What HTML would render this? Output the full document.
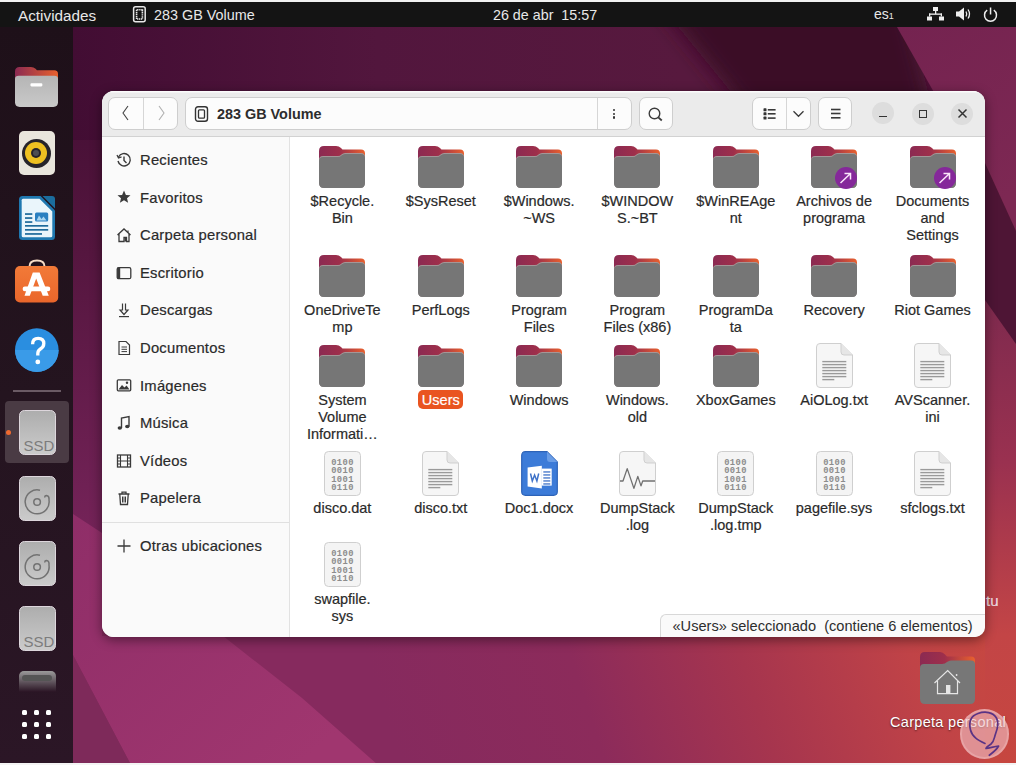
<!DOCTYPE html><html><head><meta charset="utf-8"><style>
*{margin:0;padding:0;box-sizing:border-box}
html,body{width:1016px;height:765px;overflow:hidden;background:#fff}
body{position:relative;font-family:"Liberation Sans", sans-serif;}
.abs{position:absolute}
.lbl{position:absolute;width:98px;text-align:center;font-size:14.5px;line-height:17px;color:#2a2a2a;white-space:nowrap;-webkit-text-stroke:0.2px currentColor}
.sb{position:absolute;left:140px;font-size:14.8px;line-height:17px;color:#2a2a2a;white-space:nowrap;letter-spacing:0.22px;-webkit-text-stroke:0.2px #2a2a2a}
.btn{position:absolute;top:97.2px;height:33px;background:#fcfcfc;border:1px solid #cecece;border-radius:7px}
</style></head><body>

<svg class="abs" style="left:0;top:0" width="1016" height="765" viewBox="0 0 1016 765">
<defs>
<linearGradient id="wtop" gradientUnits="userSpaceOnUse" x1="73" y1="0" x2="680" y2="0"><stop offset="0" stop-color="#420d33"/><stop offset="0.5" stop-color="#52163d"/><stop offset="1" stop-color="#57193e"/></linearGradient>
<linearGradient id="wleft" gradientUnits="userSpaceOnUse" x1="0" y1="27" x2="0" y2="530"><stop offset="0" stop-color="#3e0c30"/><stop offset="0.45" stop-color="#55163f"/><stop offset="1" stop-color="#742358"/></linearGradient>
<linearGradient id="wdark" gradientUnits="userSpaceOnUse" x1="680" y1="0" x2="920" y2="0"><stop offset="0" stop-color="#3f0f2c"/><stop offset="1" stop-color="#3b0d28"/></linearGradient>
<linearGradient id="wmag" gradientUnits="userSpaceOnUse" x1="900" y1="27" x2="1016" y2="190"><stop offset="0" stop-color="#742350"/><stop offset="1" stop-color="#7d2853"/></linearGradient>
<linearGradient id="wright" gradientUnits="userSpaceOnUse" x1="0" y1="300" x2="0" y2="765"><stop offset="0" stop-color="#7e2a4e"/><stop offset="0.35" stop-color="#9a3150"/><stop offset="0.72" stop-color="#c34546"/><stop offset="1" stop-color="#c6463f"/></linearGradient>
<linearGradient id="wbot" gradientUnits="userSpaceOnUse" x1="400" y1="760" x2="1016" y2="560"><stop offset="0" stop-color="#862a5e"/><stop offset="0.3" stop-color="#8c2b5b"/><stop offset="0.55" stop-color="#a6354e"/><stop offset="0.8" stop-color="#c04347"/><stop offset="1" stop-color="#ca4a3e"/></linearGradient>
<linearGradient id="wray" gradientUnits="userSpaceOnUse" x1="73" y1="520" x2="300" y2="765"><stop offset="0" stop-color="#8f2e68"/><stop offset="1" stop-color="#a0366f"/></linearGradient>
</defs>
<rect x="0" y="0" width="1016" height="765" fill="url(#wleft)"/>
<rect x="73" y="0" width="943" height="140" fill="url(#wtop)"/>
<filter id="blr" x="-50%" y="-50%" width="200%" height="200%"><feGaussianBlur stdDeviation="10"/></filter><polygon points="640,-20 900,-20 940,140 770,140" fill="#3a0c28" filter="url(#blr)"/>
<polygon points="897,27 1016,27 1016,140 961,140" fill="url(#wmag)"/>
<rect x="985" y="140" width="31" height="625" fill="url(#wright)"/>
<polygon points="985,91 1016,91 1016,231 985,163" fill="url(#wmag)"/>
<polygon points="985,163 1016,231 1016,344 985,300" fill="#4e1535"/>
<rect x="73" y="560" width="912" height="205" fill="url(#wbot)"/>
<polygon points="73,514 102,533 102,636 223,636 302,698 378,765 131,765 73,655" fill="url(#wray)"/>
<polygon points="73,655 131,765 73,765" fill="#7e2a5a"/>
</svg>

<div class="abs" style="left:0;top:0;width:1016px;height:2px;background:#f2f2f2"></div>
<div class="abs" style="left:0;top:2px;width:1016px;height:25px;background:#141414"></div>
<div class="abs" style="left:18px;top:7px;font-size:15.3px;color:#e8e8e8">Actividades</div>
<svg class="abs" style="left:131px;top:5px" width="17" height="19" viewBox="0 0 17 19"><rect x="2.6" y="1.8" width="11.6" height="15" rx="2" fill="none" stroke="#e8e8e8" stroke-width="1.5"/><rect x="5.6" y="4.8" width="5.8" height="9.2" fill="none" stroke="#e8e8e8" stroke-width="1.6" stroke-dasharray="1.3 0.6"/></svg>
<div class="abs" style="left:154px;top:7px;font-size:14.4px;color:#e8e8e8">283 GB Volume</div>
<div class="abs" style="left:493px;top:7px;font-size:14.3px;color:#e8e8e8;white-space:pre">26 de abr  15:57</div>
<div class="abs" style="left:874px;top:6px;font-size:14px;color:#e8e8e8">es<span style="font-size:9px">1</span></div>
<svg class="abs" style="left:927px;top:7px" width="17" height="14" viewBox="0 0 17 14"><rect x="6" y="0" width="5" height="4" fill="#eee"/><rect x="8" y="4" width="1.3" height="3" fill="#eee"/><rect x="2" y="6.5" width="13" height="1.3" fill="#eee"/><rect x="2" y="6.5" width="1.3" height="3" fill="#eee"/><rect x="13.7" y="6.5" width="1.3" height="3" fill="#eee"/><rect x="0" y="9.5" width="5" height="4" fill="#eee"/><rect x="12" y="9.5" width="5" height="4" fill="#eee"/></svg>
<svg class="abs" style="left:956px;top:7px" width="16" height="14" viewBox="0 0 16 14"><path d="M0 4.5H3L8 0.5V13.5L3 9.5H0Z" fill="#eee"/><path d="M10 4.5Q11.5 7 10 9.5M12 2.5Q15 7 12 11.5" stroke="#eee" stroke-width="1.3" fill="none"/></svg>
<svg class="abs" style="left:983px;top:7px" width="15" height="15" viewBox="0 0 15 15"><path d="M4.2 3.2A6 6 0 1 0 10.8 3.2" stroke="#eee" stroke-width="1.5" fill="none"/><rect x="6.8" y="0.5" width="1.5" height="7" fill="#eee"/></svg>

<div class="abs" style="left:0;top:27px;width:73px;height:736px;background:linear-gradient(#1e1019,#24141f 50%,#2b1626)"></div>

<svg class="abs" style="left:15.4px;top:67.4px" width="43" height="40" viewBox="0 0 46 43" preserveAspectRatio="none"><defs><linearGradient id="dft" x1="0" x2="1"><stop offset="0" stop-color="#8b2a52"/><stop offset="1" stop-color="#e8612e"/></linearGradient><linearGradient id="dfb" x1="0" y1="0" x2="0" y2="1"><stop offset="0" stop-color="#b5b5b5"/><stop offset="1" stop-color="#c9c9c9"/></linearGradient></defs><path d="M0 5Q0 0 5 0H17Q20 0 22 2L23.5 3.5H42Q46 3.5 46 7.5V20H0Z" fill="url(#dft)"/><path d="M0 13Q0 9.5 4 9.5H42Q46 9.5 46 13V38Q46 43 41 43H5Q0 43 0 38Z" fill="url(#dfb)"/><rect x="16.5" y="17.5" width="12.8" height="3.4" rx="1.2" fill="#fff"/></svg>
<div class="abs" style="left:18.6px;top:130.8px;width:36px;height:44.5px;border-radius:5px;background:#e9e5dc"></div>
<div class="abs" style="left:21.6px;top:138.9px;width:29px;height:29px;border-radius:50%;background:#26232a"></div>
<div class="abs" style="left:25.1px;top:142.4px;width:22px;height:22px;border-radius:50%;background:#eec021"></div>
<div class="abs" style="left:31.1px;top:148.4px;width:10px;height:10px;border-radius:50%;background:#26232a"></div>
<div class="abs" style="left:33.1px;top:150.4px;width:6px;height:6px;border-radius:50%;background:#4e4e52"></div>
<svg class="abs" style="left:19px;top:196.4px" width="36" height="44" viewBox="0 0 36 44"><path d="M3.5 0H21.6L36 14.4V40.5Q36 44 32.5 44H3.5Q0 44 0 40.5V3.5Q0 0 3.5 0Z" fill="#1f78b0"/><path d="M4 2.7H20.5L33.3 15.5V39.8Q33.3 41.3 31.8 41.3H4.2Q2.7 41.3 2.7 39.8V4.2Q2.7 2.7 4 2.7Z" fill="#eaf5fb"/><path d="M23.5 0H33Q36 0 36 3V12.5Z" fill="#1b6d9e"/><rect x="6" y="17.2" width="7.3" height="1.7" fill="#1f6a9a"/><rect x="6" y="21.2" width="7.3" height="1.7" fill="#1f6a9a"/><rect x="6" y="25.2" width="7.3" height="1.7" fill="#1f6a9a"/><rect x="16" y="16.6" width="13.2" height="9" rx="1.5" fill="#2a7fc0"/><path d="M17.5 24.5L20 19.5L22.5 23L24.5 20.5L27.5 24.5Z" fill="#a8d4ef"/><rect x="6" y="29" width="23.2" height="1.7" fill="#1f6a9a"/><rect x="6" y="33" width="23.2" height="1.7" fill="#1f6a9a"/><rect x="6" y="37.1" width="17" height="1.7" fill="#1f6a9a"/></svg>
<svg class="abs" style="left:15.2px;top:259px" width="44" height="44" viewBox="0 0 44 44"><defs><linearGradient id="apg" x1="0" y1="0" x2="0" y2="1"><stop offset="0" stop-color="#f27a38"/><stop offset="1" stop-color="#ea662b"/></linearGradient></defs><path d="M14.5 10V7.5Q14.5 1.6 22 1.6Q29.5 1.6 29.5 7.5V10" stroke="#f6dcc6" stroke-width="2" fill="none"/><rect x="0" y="7.1" width="43.2" height="36.4" rx="5" fill="url(#apg)"/><path d="M17.8 13.6H24.6L33.8 36.7H27.7L21.2 19.5L14.8 36.7H9.5Z" fill="#fff"/><rect x="7.6" y="27.6" width="27.7" height="4.6" rx="2.3" fill="#fff"/></svg>
<svg class="abs" style="left:14.8px;top:327.7px" width="44" height="44" viewBox="0 0 44 44"><circle cx="21.8" cy="22.1" r="21.8" fill="#2a8ee0"/><path d="M0 22.1A21.8 21.8 0 0 0 43.6 22.1Z" fill="#3a9be8"/><path d="M17.6 16.2Q17.6 10.4 23.2 10.4Q28.8 10.4 28.8 15.6Q28.8 19 25.4 21Q22.8 22.6 22.8 25.6V27.6" stroke="#fff" stroke-width="3.3" fill="none"/><circle cx="22.8" cy="33.9" r="2.4" fill="#fff"/></svg>
<div class="abs" style="left:12.5px;top:390px;width:48px;height:1.5px;background:#6a5a64"></div>
<div class="abs" style="left:4.5px;top:400.5px;width:64.5px;height:62.5px;border-radius:4px;background:#4a3b44"></div>
<div class="abs" style="left:6px;top:430px;width:5px;height:5px;border-radius:50%;background:#f06a30"></div>

<svg class="abs" style="left:18.5px;top:410px" width="37" height="45" viewBox="0 0 37 45"><defs><linearGradient id="dg410" x1="0" y1="0" x2="0" y2="1"><stop offset="0" stop-color="#adadad"/><stop offset="1" stop-color="#cbcbcb"/></linearGradient></defs><rect x="0.5" y="0.5" width="36" height="44" rx="5" fill="url(#dg410)" stroke="#ddd6dc" stroke-width="1"/><text x="20" y="41" text-anchor="middle" font-family="Liberation Sans" font-size="15" fill="#7c7c7c">SSD</text></svg>
<svg class="abs" style="left:18.5px;top:475.5px" width="37" height="45" viewBox="0 0 37 45"><defs><linearGradient id="dg475.5" x1="0" y1="0" x2="0" y2="1"><stop offset="0" stop-color="#adadad"/><stop offset="1" stop-color="#cbcbcb"/></linearGradient></defs><rect x="0.5" y="0.5" width="36" height="44" rx="5" fill="url(#dg475.5)" stroke="#ddd6dc" stroke-width="1"/><path d="M21 14.2A12 12 0 1 0 30 24Q30.5 20 27.5 19.5Q25.5 19.5 26 21.5" stroke="#727272" stroke-width="1.5" fill="none"/><circle cx="18.1" cy="26" r="3.3" stroke="#727272" stroke-width="1.5" fill="none"/></svg>
<svg class="abs" style="left:18.5px;top:541px" width="37" height="45" viewBox="0 0 37 45"><defs><linearGradient id="dg541" x1="0" y1="0" x2="0" y2="1"><stop offset="0" stop-color="#adadad"/><stop offset="1" stop-color="#cbcbcb"/></linearGradient></defs><rect x="0.5" y="0.5" width="36" height="44" rx="5" fill="url(#dg541)" stroke="#ddd6dc" stroke-width="1"/><path d="M21 14.2A12 12 0 1 0 30 24Q30.5 20 27.5 19.5Q25.5 19.5 26 21.5" stroke="#727272" stroke-width="1.5" fill="none"/><circle cx="18.1" cy="26" r="3.3" stroke="#727272" stroke-width="1.5" fill="none"/></svg>
<svg class="abs" style="left:18.5px;top:606px" width="37" height="45" viewBox="0 0 37 45"><defs><linearGradient id="dg606" x1="0" y1="0" x2="0" y2="1"><stop offset="0" stop-color="#adadad"/><stop offset="1" stop-color="#cbcbcb"/></linearGradient></defs><rect x="0.5" y="0.5" width="36" height="44" rx="5" fill="url(#dg606)" stroke="#ddd6dc" stroke-width="1"/><text x="20" y="41" text-anchor="middle" font-family="Liberation Sans" font-size="15" fill="#7c7c7c">SSD</text></svg>
<div class="abs" style="left:18.5px;top:671px;width:37px;height:21px;border-radius:5px 5px 0 0;background:linear-gradient(#9a9a9a,#2a1424)"></div>
<div class="abs" style="left:22px;top:675px;width:30px;height:6px;border-radius:3px;background:#555"></div>

<div class="abs" style="left:21.9px;top:709.7px;width:5.6px;height:5.6px;border-radius:1.5px;background:#fff"></div>
<div class="abs" style="left:33.8px;top:709.7px;width:5.6px;height:5.6px;border-radius:1.5px;background:#fff"></div>
<div class="abs" style="left:45.7px;top:709.7px;width:5.6px;height:5.6px;border-radius:1.5px;background:#fff"></div>
<div class="abs" style="left:21.9px;top:721.7px;width:5.6px;height:5.6px;border-radius:1.5px;background:#fff"></div>
<div class="abs" style="left:33.8px;top:721.7px;width:5.6px;height:5.6px;border-radius:1.5px;background:#fff"></div>
<div class="abs" style="left:45.7px;top:721.7px;width:5.6px;height:5.6px;border-radius:1.5px;background:#fff"></div>
<div class="abs" style="left:21.9px;top:733.7px;width:5.6px;height:5.6px;border-radius:1.5px;background:#fff"></div>
<div class="abs" style="left:33.8px;top:733.7px;width:5.6px;height:5.6px;border-radius:1.5px;background:#fff"></div>
<div class="abs" style="left:45.7px;top:733.7px;width:5.6px;height:5.6px;border-radius:1.5px;background:#fff"></div>
<div class="abs" style="left:0;top:763px;width:1016px;height:2px;background:#f4f4f4"></div>
<svg class="abs" style="left:920px;top:652px" width="55" height="52" viewBox="0 0 55 52"><defs><linearGradient id="htg" x1="0" x2="1"><stop offset="0" stop-color="#8b2a52"/><stop offset="0.45" stop-color="#9e2f4b"/><stop offset="1" stop-color="#e8612e"/></linearGradient></defs><path d="M0 5Q0 0 5 0H20Q23 0 25 2.5L27 4.5H51Q55 4.5 55 8.5V24H0Z" fill="url(#htg)"/><path d="M0 16Q0 12 4 12H22Q25 12 27 10Q29 8.5 31 8.5H51Q55 8.5 55 12.5V47Q55 52 50 52H5Q0 52 0 47Z" fill="#777"/><path d="M14.5 31L27.7 18.6L40 31M17.5 29V41.6H37.5V29" stroke="#e6e6e6" stroke-width="1.2" fill="none"/><rect x="26" y="33" width="4.4" height="8.6" fill="#e6e6e6"/><circle cx="36.6" cy="23" r="0.9" fill="#e6e6e6"/></svg>
<div class="abs" style="left:890px;top:714px;font-size:14.5px;color:#fff;letter-spacing:0.3px;text-shadow:0 1px 2px rgba(0,0,0,0.6);white-space:nowrap">Carpeta personal</div>
<div class="abs" style="left:986px;top:592px;font-size:15px;color:#efdde2;-webkit-text-stroke:0.2px #efdde2">tu</div>
<div class="abs" style="left:959.7px;top:709px;width:49.7px;height:50px;border-radius:50%;background:rgba(240,190,195,0.62);box-shadow:inset 0 0 0 2px rgba(255,220,220,0.25)"></div>
<svg class="abs" style="left:959.7px;top:709px" width="50" height="50" viewBox="0 0 50 50"><path d="M25 34.4C18 31 12.3 28 10.5 21C8.5 13 11 7 18 4.5C25 2 33 3 36.5 9C38.5 13 37.5 20 35.5 25C34 29 34.5 32 31 35C28 37 26 39 26 39.5C30 38.8 35 37.5 38.6 37C37 40 33 43.5 29.3 46.3" stroke="#5a3385" stroke-width="1.7" fill="none" stroke-linecap="round" stroke-linejoin="round"/></svg>

<div class="abs" style="left:102px;top:91px;width:883px;height:546px;border-radius:12px;background:#fff;box-shadow:0 3px 12px rgba(0,0,0,0.45);overflow:hidden">
<div class="abs" style="left:0;top:0;width:883px;height:46px;background:#ebebeb;border-bottom:1px solid #d2d2d2;box-shadow:inset 0 1.5px #fbfbfb"></div>
<div class="abs" style="left:0;top:46px;width:188px;height:500px;background:#fafafa;border-right:1px solid #e2e2e2"></div>
</div>

<div class="btn" style="left:108px;width:70px"></div>
<div class="abs" style="left:143px;top:98px;width:1px;height:31px;background:#d6d6d6"></div>
<svg class="abs" style="left:119px;top:104px" width="14" height="18" viewBox="0 0 14 18"><path d="M9 2L4 9L9 16" stroke="#444" stroke-width="1.1" fill="none"/></svg>
<svg class="abs" style="left:154px;top:104px" width="14" height="18" viewBox="0 0 14 18"><path d="M5 2L10 9L5 16" stroke="#b0b0b0" stroke-width="1.1" fill="none"/></svg>
<div class="btn" style="left:185px;width:447px"></div>
<div class="abs" style="left:597px;top:98px;width:1px;height:31px;background:#d6d6d6"></div>
<svg class="abs" style="left:194px;top:106px" width="15" height="16" viewBox="0 0 15 16"><rect x="1.5" y="0.8" width="12" height="14.4" rx="2.5" fill="none" stroke="#333" stroke-width="1.4"/><rect x="4.5" y="3.8" width="6" height="8.4" rx="1" fill="none" stroke="#333" stroke-width="1.3"/></svg>
<div class="abs" style="left:217px;top:106px;font-size:14.4px;font-weight:bold;color:#2d2d2d">283 GB Volume</div>
<div class="abs" style="left:612.8px;top:108.6px;width:2.5px;height:2.5px;border-radius:50%;background:#333"></div>
<div class="abs" style="left:612.8px;top:112.5px;width:2.5px;height:2.5px;border-radius:50%;background:#333"></div>
<div class="abs" style="left:612.8px;top:116.4px;width:2.5px;height:2.5px;border-radius:50%;background:#333"></div>
<div class="btn" style="left:639px;width:34px"></div>
<svg class="abs" style="left:647px;top:105.5px" width="18" height="18" viewBox="0 0 18 18"><circle cx="7.5" cy="7.5" r="5.3" stroke="#3c3c3c" stroke-width="1.4" fill="none"/><path d="M11.3 11.3L14.8 14.5" stroke="#3c3c3c" stroke-width="1.8"/></svg>
<div class="btn" style="left:752px;width:59px"></div>
<div class="abs" style="left:786px;top:98px;width:1px;height:31px;background:#d6d6d6"></div>
<svg class="abs" style="left:762.5px;top:107.5px" width="14" height="13" viewBox="0 0 14 13"><rect x="0.5" y="0.3" width="3" height="3" rx="0.6" fill="#333"/><rect x="0.5" y="4.3" width="3" height="3" rx="0.6" fill="#333"/><rect x="0.5" y="8.6" width="3" height="3" rx="0.6" fill="#333"/><rect x="4.8" y="1" width="7.8" height="1.6" fill="#3a3a3a"/><rect x="4.8" y="5" width="7.8" height="1.6" fill="#3a3a3a"/><rect x="4.8" y="9.3" width="7.8" height="1.6" fill="#3a3a3a"/></svg>
<svg class="abs" style="left:792px;top:109px" width="13" height="9" viewBox="0 0 13 9"><path d="M1.5 2.3L6.5 7.3L11.5 2.3" stroke="#3a3a3a" stroke-width="1.3" fill="none"/></svg>
<div class="btn" style="left:818px;width:34px"></div>
<svg class="abs" style="left:830.5px;top:107.5px" width="10" height="11" viewBox="0 0 10 11"><rect x="0" y="0.7" width="9.5" height="1.6" fill="#3a3a3a"/><rect x="0" y="4.7" width="9.5" height="1.6" fill="#3a3a3a"/><rect x="0" y="9" width="9.5" height="1.6" fill="#3a3a3a"/></svg>
<div class="abs" style="left:872px;top:102.3px;width:22px;height:22px;border-radius:50%;background:#dddddd"></div>
<div class="abs" style="left:879px;top:115.5px;width:8px;height:1.6px;background:#333"></div>
<div class="abs" style="left:911.7px;top:102.5px;width:22px;height:22px;border-radius:50%;background:#dddddd"></div>
<div class="abs" style="left:918.8px;top:109.6px;width:8px;height:8px;border:1.4px solid #333"></div>
<div class="abs" style="left:951.4px;top:102.5px;width:22px;height:22px;border-radius:50%;background:#dddddd"></div>
<svg class="abs" style="left:952px;top:102.5px" width="21" height="21" viewBox="0 0 21 21"><path d="M6.5 6.5L14.5 14.5M14.5 6.5L6.5 14.5" stroke="#333" stroke-width="1.5"/></svg>

<div class="sb" style="top:151.9px">Recientes</div>
<div class="sb" style="top:189.5px">Favoritos</div>
<div class="sb" style="top:227.1px">Carpeta personal</div>
<div class="sb" style="top:264.7px">Escritorio</div>
<div class="sb" style="top:302.3px">Descargas</div>
<div class="sb" style="top:339.9px">Documentos</div>
<div class="sb" style="top:377.5px">Imágenes</div>
<div class="sb" style="top:415.1px">Música</div>
<div class="sb" style="top:452.7px">Vídeos</div>
<div class="sb" style="top:490.3px">Papelera</div>
<div class="abs" style="left:102px;top:522px;width:187px;height:1px;background:#e0e0e0"></div>
<div class="sb" style="top:537.8px">Otras ubicaciones</div>
<svg class="abs" style="left:116px;top:151.7px" width="16" height="16" viewBox="0 0 16 16"><path d="M2.5 5A6.2 6.2 0 1 1 2 9" stroke="#3a3a3a" stroke-width="1.4" fill="none"/><path d="M1 3L2.5 6L5.5 4.8" stroke="#3a3a3a" stroke-width="1.3" fill="none"/><path d="M8 4.5V8.5L10.5 11" stroke="#3a3a3a" stroke-width="1.4" fill="none"/></svg>
<svg class="abs" style="left:116px;top:189.3px" width="16" height="16" viewBox="0 0 16 16"><path d="M8 1.5L9.9 5.9L14.5 6.2L11 9.2L12.1 13.8L8 11.3L3.9 13.8L5 9.2L1.5 6.2L6.1 5.9Z" fill="#3a3a3a"/></svg>
<svg class="abs" style="left:116px;top:226.9px" width="16" height="16" viewBox="0 0 16 16"><path d="M1.5 8L8 2L14.5 8M3 7V14.5H8V10.5H10.5V14.5H13V7" stroke="#3a3a3a" stroke-width="1.3" fill="none"/><rect x="8.5" y="10.5" width="2.5" height="4" fill="#3a3a3a"/><path d="M12 3.5V5.5" stroke="#3a3a3a" stroke-width="1.2"/></svg>
<svg class="abs" style="left:116px;top:264.5px" width="16" height="16" viewBox="0 0 16 16"><rect x="1.2" y="2.7" width="13.6" height="11" rx="1.5" fill="none" stroke="#3a3a3a" stroke-width="1.3"/><rect x="1.2" y="2.7" width="3" height="11" fill="#3a3a3a"/></svg>
<svg class="abs" style="left:116px;top:302.1px" width="16" height="16" viewBox="0 0 16 16"><path d="M6.5 1.5V8H4L8 12.5L12 8H9.5V1.5" stroke="#3a3a3a" stroke-width="1.2" fill="none"/><rect x="3" y="14" width="10" height="1.2" fill="#3a3a3a"/></svg>
<svg class="abs" style="left:116px;top:339.7px" width="16" height="16" viewBox="0 0 16 16"><path d="M3 1.5H10L13.5 5V14.5H3Z" stroke="#3a3a3a" stroke-width="1.2" fill="none"/><path d="M5.5 7H11M5.5 9.3H11M5.5 11.6H11" stroke="#3a3a3a" stroke-width="1"/></svg>
<svg class="abs" style="left:116px;top:377.3px" width="16" height="16" viewBox="0 0 16 16"><rect x="1.3" y="2.8" width="13.4" height="11" rx="1" fill="none" stroke="#3a3a3a" stroke-width="1.3"/><path d="M2.5 12.5L6 8L8.5 10.5L10.5 8.5L13.5 12.5Z" fill="#3a3a3a"/><circle cx="11" cy="5.8" r="1.2" fill="#3a3a3a"/></svg>
<svg class="abs" style="left:116px;top:414.9px" width="16" height="16" viewBox="0 0 16 16"><path d="M5.5 13V3L13 1.5V11.5" stroke="#3a3a3a" stroke-width="1.4" fill="none"/><ellipse cx="3.8" cy="13" rx="2.2" ry="1.8" fill="#3a3a3a"/><ellipse cx="11.3" cy="11.5" rx="2.2" ry="1.8" fill="#3a3a3a"/></svg>
<svg class="abs" style="left:116px;top:452.5px" width="16" height="16" viewBox="0 0 16 16"><rect x="1.5" y="2" width="13" height="12" fill="none" stroke="#3a3a3a" stroke-width="1.3"/><path d="M4.5 2V14M11.5 2V14M1.5 8H14.5M1.5 5H4.5M1.5 11H4.5M11.5 5H14.5M11.5 11H14.5" stroke="#3a3a3a" stroke-width="1.1"/></svg>
<svg class="abs" style="left:116px;top:490.1px" width="16" height="16" viewBox="0 0 16 16"><path d="M2.5 4H13.5M6 4V2.2H10V4M3.8 4.5L4.5 14.5H11.5L12.2 4.5" stroke="#3a3a3a" stroke-width="1.3" fill="none"/><path d="M6.5 6.5V12.5M8 6.5V12.5M9.5 6.5V12.5" stroke="#3a3a3a" stroke-width="1"/></svg>
<svg class="abs" style="left:116px;top:537.6px" width="16" height="16" viewBox="0 0 16 16"><path d="M8 1.5V14.5M1.5 8H14.5" stroke="#3a3a3a" stroke-width="1.3"/></svg>
<div style="position:absolute;left:319.4px;top:146px;width:46px;height:42px"><svg width="46" height="42" viewBox="0 0 46 42"><defs><linearGradient id="tg" x1="0" x2="1" y1="0" y2="0"><stop offset="0" stop-color="#8b2a52"/><stop offset="0.45" stop-color="#9e2f4b"/><stop offset="1" stop-color="#e8612e"/></linearGradient></defs><path d="M0 5Q0 0 5 0H17Q20 0 22 2L23.5 3.5H42Q46 3.5 46 7.5V22H0Z" fill="url(#tg)"/><path d="M0 14Q0 10 4 10H19Q21 10 22.5 8.5Q24 7 26 7H42Q46 7 46 11V37Q46 42 41 42H5Q0 42 0 37Z" fill="#a39697"/><path d="M0 15Q0 11 4 11H19Q21 11 22.5 9.5Q24 8 26 8H42Q46 8 46 12V37Q46 42 41 42H5Q0 42 0 37Z" fill="#767676"/></svg></div><div class="lbl" style="left:293.4px;top:193.0px">$Recycle.<br>Bin</div><div style="position:absolute;left:417.8px;top:146px;width:46px;height:42px"><svg width="46" height="42" viewBox="0 0 46 42"><defs><linearGradient id="tg" x1="0" x2="1" y1="0" y2="0"><stop offset="0" stop-color="#8b2a52"/><stop offset="0.45" stop-color="#9e2f4b"/><stop offset="1" stop-color="#e8612e"/></linearGradient></defs><path d="M0 5Q0 0 5 0H17Q20 0 22 2L23.5 3.5H42Q46 3.5 46 7.5V22H0Z" fill="url(#tg)"/><path d="M0 14Q0 10 4 10H19Q21 10 22.5 8.5Q24 7 26 7H42Q46 7 46 11V37Q46 42 41 42H5Q0 42 0 37Z" fill="#a39697"/><path d="M0 15Q0 11 4 11H19Q21 11 22.5 9.5Q24 8 26 8H42Q46 8 46 12V37Q46 42 41 42H5Q0 42 0 37Z" fill="#767676"/></svg></div><div class="lbl" style="left:391.8px;top:193.0px">$SysReset</div><div style="position:absolute;left:516.1px;top:146px;width:46px;height:42px"><svg width="46" height="42" viewBox="0 0 46 42"><defs><linearGradient id="tg" x1="0" x2="1" y1="0" y2="0"><stop offset="0" stop-color="#8b2a52"/><stop offset="0.45" stop-color="#9e2f4b"/><stop offset="1" stop-color="#e8612e"/></linearGradient></defs><path d="M0 5Q0 0 5 0H17Q20 0 22 2L23.5 3.5H42Q46 3.5 46 7.5V22H0Z" fill="url(#tg)"/><path d="M0 14Q0 10 4 10H19Q21 10 22.5 8.5Q24 7 26 7H42Q46 7 46 11V37Q46 42 41 42H5Q0 42 0 37Z" fill="#a39697"/><path d="M0 15Q0 11 4 11H19Q21 11 22.5 9.5Q24 8 26 8H42Q46 8 46 12V37Q46 42 41 42H5Q0 42 0 37Z" fill="#767676"/></svg></div><div class="lbl" style="left:490.1px;top:193.0px">$Windows.<br>~WS</div><div style="position:absolute;left:614.4px;top:146px;width:46px;height:42px"><svg width="46" height="42" viewBox="0 0 46 42"><defs><linearGradient id="tg" x1="0" x2="1" y1="0" y2="0"><stop offset="0" stop-color="#8b2a52"/><stop offset="0.45" stop-color="#9e2f4b"/><stop offset="1" stop-color="#e8612e"/></linearGradient></defs><path d="M0 5Q0 0 5 0H17Q20 0 22 2L23.5 3.5H42Q46 3.5 46 7.5V22H0Z" fill="url(#tg)"/><path d="M0 14Q0 10 4 10H19Q21 10 22.5 8.5Q24 7 26 7H42Q46 7 46 11V37Q46 42 41 42H5Q0 42 0 37Z" fill="#a39697"/><path d="M0 15Q0 11 4 11H19Q21 11 22.5 9.5Q24 8 26 8H42Q46 8 46 12V37Q46 42 41 42H5Q0 42 0 37Z" fill="#767676"/></svg></div><div class="lbl" style="left:588.4px;top:193.0px">$WINDOW<br>S.~BT</div><div style="position:absolute;left:712.8px;top:146px;width:46px;height:42px"><svg width="46" height="42" viewBox="0 0 46 42"><defs><linearGradient id="tg" x1="0" x2="1" y1="0" y2="0"><stop offset="0" stop-color="#8b2a52"/><stop offset="0.45" stop-color="#9e2f4b"/><stop offset="1" stop-color="#e8612e"/></linearGradient></defs><path d="M0 5Q0 0 5 0H17Q20 0 22 2L23.5 3.5H42Q46 3.5 46 7.5V22H0Z" fill="url(#tg)"/><path d="M0 14Q0 10 4 10H19Q21 10 22.5 8.5Q24 7 26 7H42Q46 7 46 11V37Q46 42 41 42H5Q0 42 0 37Z" fill="#a39697"/><path d="M0 15Q0 11 4 11H19Q21 11 22.5 9.5Q24 8 26 8H42Q46 8 46 12V37Q46 42 41 42H5Q0 42 0 37Z" fill="#767676"/></svg></div><div class="lbl" style="left:686.8px;top:193.0px">$WinREAge<br>nt</div><div style="position:absolute;left:811.1px;top:146px;width:46px;height:42px"><svg width="46" height="42" viewBox="0 0 46 42"><defs><linearGradient id="tg" x1="0" x2="1" y1="0" y2="0"><stop offset="0" stop-color="#8b2a52"/><stop offset="0.45" stop-color="#9e2f4b"/><stop offset="1" stop-color="#e8612e"/></linearGradient></defs><path d="M0 5Q0 0 5 0H17Q20 0 22 2L23.5 3.5H42Q46 3.5 46 7.5V22H0Z" fill="url(#tg)"/><path d="M0 14Q0 10 4 10H19Q21 10 22.5 8.5Q24 7 26 7H42Q46 7 46 11V37Q46 42 41 42H5Q0 42 0 37Z" fill="#a39697"/><path d="M0 15Q0 11 4 11H19Q21 11 22.5 9.5Q24 8 26 8H42Q46 8 46 12V37Q46 42 41 42H5Q0 42 0 37Z" fill="#767676"/></svg><div style="position:absolute;left:24px;top:21px;width:22px;height:22px;border-radius:50%;background:#85289a"><svg width="22" height="22" viewBox="0 0 22 22" style="position:absolute;left:0;top:0"><path d="M5.5 16L15.5 6.5M9.5 6.5H15.5V12.5" stroke="#fbe6fb" stroke-width="1.5" fill="none"/></svg></div></div><div class="lbl" style="left:785.1px;top:193.0px">Archivos de<br>programa</div><div style="position:absolute;left:909.5px;top:146px;width:46px;height:42px"><svg width="46" height="42" viewBox="0 0 46 42"><defs><linearGradient id="tg" x1="0" x2="1" y1="0" y2="0"><stop offset="0" stop-color="#8b2a52"/><stop offset="0.45" stop-color="#9e2f4b"/><stop offset="1" stop-color="#e8612e"/></linearGradient></defs><path d="M0 5Q0 0 5 0H17Q20 0 22 2L23.5 3.5H42Q46 3.5 46 7.5V22H0Z" fill="url(#tg)"/><path d="M0 14Q0 10 4 10H19Q21 10 22.5 8.5Q24 7 26 7H42Q46 7 46 11V37Q46 42 41 42H5Q0 42 0 37Z" fill="#a39697"/><path d="M0 15Q0 11 4 11H19Q21 11 22.5 9.5Q24 8 26 8H42Q46 8 46 12V37Q46 42 41 42H5Q0 42 0 37Z" fill="#767676"/></svg><div style="position:absolute;left:24px;top:21px;width:22px;height:22px;border-radius:50%;background:#85289a"><svg width="22" height="22" viewBox="0 0 22 22" style="position:absolute;left:0;top:0"><path d="M5.5 16L15.5 6.5M9.5 6.5H15.5V12.5" stroke="#fbe6fb" stroke-width="1.5" fill="none"/></svg></div></div><div class="lbl" style="left:883.5px;top:193.0px">Documents<br>and<br>Settings</div><div style="position:absolute;left:319.4px;top:254.5px;width:46px;height:42px"><svg width="46" height="42" viewBox="0 0 46 42"><defs><linearGradient id="tg" x1="0" x2="1" y1="0" y2="0"><stop offset="0" stop-color="#8b2a52"/><stop offset="0.45" stop-color="#9e2f4b"/><stop offset="1" stop-color="#e8612e"/></linearGradient></defs><path d="M0 5Q0 0 5 0H17Q20 0 22 2L23.5 3.5H42Q46 3.5 46 7.5V22H0Z" fill="url(#tg)"/><path d="M0 14Q0 10 4 10H19Q21 10 22.5 8.5Q24 7 26 7H42Q46 7 46 11V37Q46 42 41 42H5Q0 42 0 37Z" fill="#a39697"/><path d="M0 15Q0 11 4 11H19Q21 11 22.5 9.5Q24 8 26 8H42Q46 8 46 12V37Q46 42 41 42H5Q0 42 0 37Z" fill="#767676"/></svg></div><div class="lbl" style="left:293.4px;top:301.5px">OneDriveTe<br>mp</div><div style="position:absolute;left:417.8px;top:254.5px;width:46px;height:42px"><svg width="46" height="42" viewBox="0 0 46 42"><defs><linearGradient id="tg" x1="0" x2="1" y1="0" y2="0"><stop offset="0" stop-color="#8b2a52"/><stop offset="0.45" stop-color="#9e2f4b"/><stop offset="1" stop-color="#e8612e"/></linearGradient></defs><path d="M0 5Q0 0 5 0H17Q20 0 22 2L23.5 3.5H42Q46 3.5 46 7.5V22H0Z" fill="url(#tg)"/><path d="M0 14Q0 10 4 10H19Q21 10 22.5 8.5Q24 7 26 7H42Q46 7 46 11V37Q46 42 41 42H5Q0 42 0 37Z" fill="#a39697"/><path d="M0 15Q0 11 4 11H19Q21 11 22.5 9.5Q24 8 26 8H42Q46 8 46 12V37Q46 42 41 42H5Q0 42 0 37Z" fill="#767676"/></svg></div><div class="lbl" style="left:391.8px;top:301.5px">PerfLogs</div><div style="position:absolute;left:516.1px;top:254.5px;width:46px;height:42px"><svg width="46" height="42" viewBox="0 0 46 42"><defs><linearGradient id="tg" x1="0" x2="1" y1="0" y2="0"><stop offset="0" stop-color="#8b2a52"/><stop offset="0.45" stop-color="#9e2f4b"/><stop offset="1" stop-color="#e8612e"/></linearGradient></defs><path d="M0 5Q0 0 5 0H17Q20 0 22 2L23.5 3.5H42Q46 3.5 46 7.5V22H0Z" fill="url(#tg)"/><path d="M0 14Q0 10 4 10H19Q21 10 22.5 8.5Q24 7 26 7H42Q46 7 46 11V37Q46 42 41 42H5Q0 42 0 37Z" fill="#a39697"/><path d="M0 15Q0 11 4 11H19Q21 11 22.5 9.5Q24 8 26 8H42Q46 8 46 12V37Q46 42 41 42H5Q0 42 0 37Z" fill="#767676"/></svg></div><div class="lbl" style="left:490.1px;top:301.5px">Program<br>Files</div><div style="position:absolute;left:614.4px;top:254.5px;width:46px;height:42px"><svg width="46" height="42" viewBox="0 0 46 42"><defs><linearGradient id="tg" x1="0" x2="1" y1="0" y2="0"><stop offset="0" stop-color="#8b2a52"/><stop offset="0.45" stop-color="#9e2f4b"/><stop offset="1" stop-color="#e8612e"/></linearGradient></defs><path d="M0 5Q0 0 5 0H17Q20 0 22 2L23.5 3.5H42Q46 3.5 46 7.5V22H0Z" fill="url(#tg)"/><path d="M0 14Q0 10 4 10H19Q21 10 22.5 8.5Q24 7 26 7H42Q46 7 46 11V37Q46 42 41 42H5Q0 42 0 37Z" fill="#a39697"/><path d="M0 15Q0 11 4 11H19Q21 11 22.5 9.5Q24 8 26 8H42Q46 8 46 12V37Q46 42 41 42H5Q0 42 0 37Z" fill="#767676"/></svg></div><div class="lbl" style="left:588.4px;top:301.5px">Program<br>Files (x86)</div><div style="position:absolute;left:712.8px;top:254.5px;width:46px;height:42px"><svg width="46" height="42" viewBox="0 0 46 42"><defs><linearGradient id="tg" x1="0" x2="1" y1="0" y2="0"><stop offset="0" stop-color="#8b2a52"/><stop offset="0.45" stop-color="#9e2f4b"/><stop offset="1" stop-color="#e8612e"/></linearGradient></defs><path d="M0 5Q0 0 5 0H17Q20 0 22 2L23.5 3.5H42Q46 3.5 46 7.5V22H0Z" fill="url(#tg)"/><path d="M0 14Q0 10 4 10H19Q21 10 22.5 8.5Q24 7 26 7H42Q46 7 46 11V37Q46 42 41 42H5Q0 42 0 37Z" fill="#a39697"/><path d="M0 15Q0 11 4 11H19Q21 11 22.5 9.5Q24 8 26 8H42Q46 8 46 12V37Q46 42 41 42H5Q0 42 0 37Z" fill="#767676"/></svg></div><div class="lbl" style="left:686.8px;top:301.5px">ProgramDa<br>ta</div><div style="position:absolute;left:811.1px;top:254.5px;width:46px;height:42px"><svg width="46" height="42" viewBox="0 0 46 42"><defs><linearGradient id="tg" x1="0" x2="1" y1="0" y2="0"><stop offset="0" stop-color="#8b2a52"/><stop offset="0.45" stop-color="#9e2f4b"/><stop offset="1" stop-color="#e8612e"/></linearGradient></defs><path d="M0 5Q0 0 5 0H17Q20 0 22 2L23.5 3.5H42Q46 3.5 46 7.5V22H0Z" fill="url(#tg)"/><path d="M0 14Q0 10 4 10H19Q21 10 22.5 8.5Q24 7 26 7H42Q46 7 46 11V37Q46 42 41 42H5Q0 42 0 37Z" fill="#a39697"/><path d="M0 15Q0 11 4 11H19Q21 11 22.5 9.5Q24 8 26 8H42Q46 8 46 12V37Q46 42 41 42H5Q0 42 0 37Z" fill="#767676"/></svg></div><div class="lbl" style="left:785.1px;top:301.5px">Recovery</div><div style="position:absolute;left:909.5px;top:254.5px;width:46px;height:42px"><svg width="46" height="42" viewBox="0 0 46 42"><defs><linearGradient id="tg" x1="0" x2="1" y1="0" y2="0"><stop offset="0" stop-color="#8b2a52"/><stop offset="0.45" stop-color="#9e2f4b"/><stop offset="1" stop-color="#e8612e"/></linearGradient></defs><path d="M0 5Q0 0 5 0H17Q20 0 22 2L23.5 3.5H42Q46 3.5 46 7.5V22H0Z" fill="url(#tg)"/><path d="M0 14Q0 10 4 10H19Q21 10 22.5 8.5Q24 7 26 7H42Q46 7 46 11V37Q46 42 41 42H5Q0 42 0 37Z" fill="#a39697"/><path d="M0 15Q0 11 4 11H19Q21 11 22.5 9.5Q24 8 26 8H42Q46 8 46 12V37Q46 42 41 42H5Q0 42 0 37Z" fill="#767676"/></svg></div><div class="lbl" style="left:883.5px;top:301.5px">Riot Games</div><div style="position:absolute;left:319.4px;top:344.5px;width:46px;height:42px"><svg width="46" height="42" viewBox="0 0 46 42"><defs><linearGradient id="tg" x1="0" x2="1" y1="0" y2="0"><stop offset="0" stop-color="#8b2a52"/><stop offset="0.45" stop-color="#9e2f4b"/><stop offset="1" stop-color="#e8612e"/></linearGradient></defs><path d="M0 5Q0 0 5 0H17Q20 0 22 2L23.5 3.5H42Q46 3.5 46 7.5V22H0Z" fill="url(#tg)"/><path d="M0 14Q0 10 4 10H19Q21 10 22.5 8.5Q24 7 26 7H42Q46 7 46 11V37Q46 42 41 42H5Q0 42 0 37Z" fill="#a39697"/><path d="M0 15Q0 11 4 11H19Q21 11 22.5 9.5Q24 8 26 8H42Q46 8 46 12V37Q46 42 41 42H5Q0 42 0 37Z" fill="#767676"/></svg></div><div class="lbl" style="left:293.4px;top:391.5px">System<br>Volume<br>Informati…</div><div style="position:absolute;left:417.8px;top:344.5px;width:46px;height:42px"><svg width="46" height="42" viewBox="0 0 46 42"><defs><linearGradient id="tg" x1="0" x2="1" y1="0" y2="0"><stop offset="0" stop-color="#8b2a52"/><stop offset="0.45" stop-color="#9e2f4b"/><stop offset="1" stop-color="#e8612e"/></linearGradient></defs><path d="M0 5Q0 0 5 0H17Q20 0 22 2L23.5 3.5H42Q46 3.5 46 7.5V22H0Z" fill="url(#tg)"/><path d="M0 14Q0 10 4 10H19Q21 10 22.5 8.5Q24 7 26 7H42Q46 7 46 11V37Q46 42 41 42H5Q0 42 0 37Z" fill="#a39697"/><path d="M0 15Q0 11 4 11H19Q21 11 22.5 9.5Q24 8 26 8H42Q46 8 46 12V37Q46 42 41 42H5Q0 42 0 37Z" fill="#767676"/></svg></div><div style="position:absolute;left:418.1px;top:389.5px;width:45px;height:19.5px;border-radius:5px;background:#e95420"></div><div class="lbl" style="left:391.8px;top:391.5px;color:#fff">Users</div><div style="position:absolute;left:516.1px;top:344.5px;width:46px;height:42px"><svg width="46" height="42" viewBox="0 0 46 42"><defs><linearGradient id="tg" x1="0" x2="1" y1="0" y2="0"><stop offset="0" stop-color="#8b2a52"/><stop offset="0.45" stop-color="#9e2f4b"/><stop offset="1" stop-color="#e8612e"/></linearGradient></defs><path d="M0 5Q0 0 5 0H17Q20 0 22 2L23.5 3.5H42Q46 3.5 46 7.5V22H0Z" fill="url(#tg)"/><path d="M0 14Q0 10 4 10H19Q21 10 22.5 8.5Q24 7 26 7H42Q46 7 46 11V37Q46 42 41 42H5Q0 42 0 37Z" fill="#a39697"/><path d="M0 15Q0 11 4 11H19Q21 11 22.5 9.5Q24 8 26 8H42Q46 8 46 12V37Q46 42 41 42H5Q0 42 0 37Z" fill="#767676"/></svg></div><div class="lbl" style="left:490.1px;top:391.5px">Windows</div><div style="position:absolute;left:614.4px;top:344.5px;width:46px;height:42px"><svg width="46" height="42" viewBox="0 0 46 42"><defs><linearGradient id="tg" x1="0" x2="1" y1="0" y2="0"><stop offset="0" stop-color="#8b2a52"/><stop offset="0.45" stop-color="#9e2f4b"/><stop offset="1" stop-color="#e8612e"/></linearGradient></defs><path d="M0 5Q0 0 5 0H17Q20 0 22 2L23.5 3.5H42Q46 3.5 46 7.5V22H0Z" fill="url(#tg)"/><path d="M0 14Q0 10 4 10H19Q21 10 22.5 8.5Q24 7 26 7H42Q46 7 46 11V37Q46 42 41 42H5Q0 42 0 37Z" fill="#a39697"/><path d="M0 15Q0 11 4 11H19Q21 11 22.5 9.5Q24 8 26 8H42Q46 8 46 12V37Q46 42 41 42H5Q0 42 0 37Z" fill="#767676"/></svg></div><div class="lbl" style="left:588.4px;top:391.5px">Windows.<br>old</div><div style="position:absolute;left:712.8px;top:344.5px;width:46px;height:42px"><svg width="46" height="42" viewBox="0 0 46 42"><defs><linearGradient id="tg" x1="0" x2="1" y1="0" y2="0"><stop offset="0" stop-color="#8b2a52"/><stop offset="0.45" stop-color="#9e2f4b"/><stop offset="1" stop-color="#e8612e"/></linearGradient></defs><path d="M0 5Q0 0 5 0H17Q20 0 22 2L23.5 3.5H42Q46 3.5 46 7.5V22H0Z" fill="url(#tg)"/><path d="M0 14Q0 10 4 10H19Q21 10 22.5 8.5Q24 7 26 7H42Q46 7 46 11V37Q46 42 41 42H5Q0 42 0 37Z" fill="#a39697"/><path d="M0 15Q0 11 4 11H19Q21 11 22.5 9.5Q24 8 26 8H42Q46 8 46 12V37Q46 42 41 42H5Q0 42 0 37Z" fill="#767676"/></svg></div><div class="lbl" style="left:686.8px;top:391.5px">XboxGames</div><div style="position:absolute;left:815.6px;top:342.5px;width:37px;height:45px"><svg width="37" height="45" viewBox="0 0 37 45"><path d="M4 0.5H25L36.5 12V41Q36.5 44.5 33 44.5H4Q0.5 44.5 0.5 41V4Q0.5 0.5 4 0.5Z" fill="#f6f6f6" stroke="#cfcfcf"/><path d="M25 0.5V9Q25 12 28 12H36.5" fill="#e6e6e6" stroke="#cfcfcf"/><rect x="6.3" y="17.9" width="24" height="1.4" fill="#9a9a9a"/><rect x="6.3" y="20.9" width="24" height="1.4" fill="#9a9a9a"/><rect x="6.3" y="23.9" width="24" height="1.4" fill="#9a9a9a"/><rect x="6.3" y="26.9" width="24" height="1.4" fill="#9a9a9a"/><rect x="6.3" y="29.9" width="24" height="1.4" fill="#9a9a9a"/><rect x="6.3" y="32.9" width="24" height="1.4" fill="#9a9a9a"/><rect x="6.3" y="35.9" width="12" height="1.4" fill="#9a9a9a"/></svg></div><div class="lbl" style="left:785.1px;top:391.5px">AiOLog.txt</div><div style="position:absolute;left:914.0px;top:342.5px;width:37px;height:45px"><svg width="37" height="45" viewBox="0 0 37 45"><path d="M4 0.5H25L36.5 12V41Q36.5 44.5 33 44.5H4Q0.5 44.5 0.5 41V4Q0.5 0.5 4 0.5Z" fill="#f6f6f6" stroke="#cfcfcf"/><path d="M25 0.5V9Q25 12 28 12H36.5" fill="#e6e6e6" stroke="#cfcfcf"/><rect x="6.3" y="17.9" width="24" height="1.4" fill="#9a9a9a"/><rect x="6.3" y="20.9" width="24" height="1.4" fill="#9a9a9a"/><rect x="6.3" y="23.9" width="24" height="1.4" fill="#9a9a9a"/><rect x="6.3" y="26.9" width="24" height="1.4" fill="#9a9a9a"/><rect x="6.3" y="29.9" width="24" height="1.4" fill="#9a9a9a"/><rect x="6.3" y="32.9" width="24" height="1.4" fill="#9a9a9a"/><rect x="6.3" y="35.9" width="12" height="1.4" fill="#9a9a9a"/></svg></div><div class="lbl" style="left:883.5px;top:391.5px">AVScanner.<br>ini</div><div style="position:absolute;left:323.9px;top:451px;width:37px;height:45px"><svg width="37" height="45" viewBox="0 0 37 45"><rect x="0.5" y="0.5" width="36" height="44" rx="4" fill="#f4f4f4" stroke="#cfcfcf"/><text x="18.5" y="14.0" text-anchor="middle" font-family="Liberation Mono" font-size="8.8" font-weight="bold" fill="#8c8c8c" letter-spacing="0.4">0100</text><text x="18.5" y="22.3" text-anchor="middle" font-family="Liberation Mono" font-size="8.8" font-weight="bold" fill="#8c8c8c" letter-spacing="0.4">0010</text><text x="18.5" y="30.6" text-anchor="middle" font-family="Liberation Mono" font-size="8.8" font-weight="bold" fill="#8c8c8c" letter-spacing="0.4">1001</text><text x="18.5" y="38.900000000000006" text-anchor="middle" font-family="Liberation Mono" font-size="8.8" font-weight="bold" fill="#8c8c8c" letter-spacing="0.4">0110</text></svg></div><div class="lbl" style="left:293.4px;top:500.0px">disco.dat</div><div style="position:absolute;left:422.2px;top:451px;width:37px;height:45px"><svg width="37" height="45" viewBox="0 0 37 45"><path d="M4 0.5H25L36.5 12V41Q36.5 44.5 33 44.5H4Q0.5 44.5 0.5 41V4Q0.5 0.5 4 0.5Z" fill="#f6f6f6" stroke="#cfcfcf"/><path d="M25 0.5V9Q25 12 28 12H36.5" fill="#e6e6e6" stroke="#cfcfcf"/><rect x="6.3" y="17.9" width="24" height="1.4" fill="#9a9a9a"/><rect x="6.3" y="20.9" width="24" height="1.4" fill="#9a9a9a"/><rect x="6.3" y="23.9" width="24" height="1.4" fill="#9a9a9a"/><rect x="6.3" y="26.9" width="24" height="1.4" fill="#9a9a9a"/><rect x="6.3" y="29.9" width="24" height="1.4" fill="#9a9a9a"/><rect x="6.3" y="32.9" width="24" height="1.4" fill="#9a9a9a"/><rect x="6.3" y="35.9" width="12" height="1.4" fill="#9a9a9a"/></svg></div><div class="lbl" style="left:391.8px;top:500.0px">disco.txt</div><div style="position:absolute;left:520.6px;top:451px;width:37px;height:45px"><svg width="37" height="45" viewBox="0 0 37 45"><path d="M4.5 0.7H26L36.3 11V40.5Q36.3 44.3 32.5 44.3H4.5Q0.7 44.3 0.7 40.5V4.5Q0.7 0.7 4.5 0.7Z" fill="#3c7bd8" stroke="#2d63b8" stroke-width="1.2"/><path d="M26 0.7V8Q26 11 29 11H36.3Z" fill="#6a9de6"/><rect x="20.5" y="17.6" width="10.2" height="17" fill="#fff"/><rect x="22.3" y="20.3" width="7" height="1.3" fill="#3f72c8"/><rect x="22.3" y="23.3" width="7" height="1.3" fill="#3f72c8"/><rect x="22.3" y="26.3" width="7" height="1.3" fill="#3f72c8"/><rect x="22.3" y="29.3" width="7" height="1.3" fill="#3f72c8"/><rect x="22.3" y="32.3" width="7" height="1.3" fill="#3f72c8"/><path d="M6.6 16.6L20.8 14.8V37.4L6.6 35.6Z" fill="#fff"/><path d="M9.5 22.5L11.3 30L13.6 24L15.9 30L17.7 22.5" stroke="#3f72c8" stroke-width="1.5" fill="none"/></svg></div><div class="lbl" style="left:490.1px;top:500.0px">Doc1.docx</div><div style="position:absolute;left:618.9px;top:451px;width:37px;height:45px"><svg width="37" height="45" viewBox="0 0 37 45"><path d="M4 0.5H25L36.5 12V41Q36.5 44.5 33 44.5H4Q0.5 44.5 0.5 41V4Q0.5 0.5 4 0.5Z" fill="#f6f6f6" stroke="#cfcfcf"/><path d="M25 0.5V9Q25 12 28 12H36.5" fill="#e6e6e6" stroke="#cfcfcf"/><path d="M1 30H4L8.2 17.6L14.9 37.4L18.8 25.4L22 34.9L23.7 30H36" stroke="#707070" stroke-width="1.3" fill="none" stroke-linejoin="round"/></svg></div><div class="lbl" style="left:588.4px;top:500.0px">DumpStack<br>.log</div><div style="position:absolute;left:717.3px;top:451px;width:37px;height:45px"><svg width="37" height="45" viewBox="0 0 37 45"><rect x="0.5" y="0.5" width="36" height="44" rx="4" fill="#f4f4f4" stroke="#cfcfcf"/><text x="18.5" y="14.0" text-anchor="middle" font-family="Liberation Mono" font-size="8.8" font-weight="bold" fill="#8c8c8c" letter-spacing="0.4">0100</text><text x="18.5" y="22.3" text-anchor="middle" font-family="Liberation Mono" font-size="8.8" font-weight="bold" fill="#8c8c8c" letter-spacing="0.4">0010</text><text x="18.5" y="30.6" text-anchor="middle" font-family="Liberation Mono" font-size="8.8" font-weight="bold" fill="#8c8c8c" letter-spacing="0.4">1001</text><text x="18.5" y="38.900000000000006" text-anchor="middle" font-family="Liberation Mono" font-size="8.8" font-weight="bold" fill="#8c8c8c" letter-spacing="0.4">0110</text></svg></div><div class="lbl" style="left:686.8px;top:500.0px">DumpStack<br>.log.tmp</div><div style="position:absolute;left:815.6px;top:451px;width:37px;height:45px"><svg width="37" height="45" viewBox="0 0 37 45"><rect x="0.5" y="0.5" width="36" height="44" rx="4" fill="#f4f4f4" stroke="#cfcfcf"/><text x="18.5" y="14.0" text-anchor="middle" font-family="Liberation Mono" font-size="8.8" font-weight="bold" fill="#8c8c8c" letter-spacing="0.4">0100</text><text x="18.5" y="22.3" text-anchor="middle" font-family="Liberation Mono" font-size="8.8" font-weight="bold" fill="#8c8c8c" letter-spacing="0.4">0010</text><text x="18.5" y="30.6" text-anchor="middle" font-family="Liberation Mono" font-size="8.8" font-weight="bold" fill="#8c8c8c" letter-spacing="0.4">1001</text><text x="18.5" y="38.900000000000006" text-anchor="middle" font-family="Liberation Mono" font-size="8.8" font-weight="bold" fill="#8c8c8c" letter-spacing="0.4">0110</text></svg></div><div class="lbl" style="left:785.1px;top:500.0px">pagefile.sys</div><div style="position:absolute;left:914.0px;top:451px;width:37px;height:45px"><svg width="37" height="45" viewBox="0 0 37 45"><path d="M4 0.5H25L36.5 12V41Q36.5 44.5 33 44.5H4Q0.5 44.5 0.5 41V4Q0.5 0.5 4 0.5Z" fill="#f6f6f6" stroke="#cfcfcf"/><path d="M25 0.5V9Q25 12 28 12H36.5" fill="#e6e6e6" stroke="#cfcfcf"/><rect x="6.3" y="17.9" width="24" height="1.4" fill="#9a9a9a"/><rect x="6.3" y="20.9" width="24" height="1.4" fill="#9a9a9a"/><rect x="6.3" y="23.9" width="24" height="1.4" fill="#9a9a9a"/><rect x="6.3" y="26.9" width="24" height="1.4" fill="#9a9a9a"/><rect x="6.3" y="29.9" width="24" height="1.4" fill="#9a9a9a"/><rect x="6.3" y="32.9" width="24" height="1.4" fill="#9a9a9a"/><rect x="6.3" y="35.9" width="12" height="1.4" fill="#9a9a9a"/></svg></div><div class="lbl" style="left:883.5px;top:500.0px">sfclogs.txt</div><div style="position:absolute;left:323.9px;top:542px;width:37px;height:45px"><svg width="37" height="45" viewBox="0 0 37 45"><rect x="0.5" y="0.5" width="36" height="44" rx="4" fill="#f4f4f4" stroke="#cfcfcf"/><text x="18.5" y="14.0" text-anchor="middle" font-family="Liberation Mono" font-size="8.8" font-weight="bold" fill="#8c8c8c" letter-spacing="0.4">0100</text><text x="18.5" y="22.3" text-anchor="middle" font-family="Liberation Mono" font-size="8.8" font-weight="bold" fill="#8c8c8c" letter-spacing="0.4">0010</text><text x="18.5" y="30.6" text-anchor="middle" font-family="Liberation Mono" font-size="8.8" font-weight="bold" fill="#8c8c8c" letter-spacing="0.4">1001</text><text x="18.5" y="38.900000000000006" text-anchor="middle" font-family="Liberation Mono" font-size="8.8" font-weight="bold" fill="#8c8c8c" letter-spacing="0.4">0110</text></svg></div><div class="lbl" style="left:293.4px;top:591.0px">swapfile.<br>sys</div>
<div class="abs" style="left:660px;top:614px;width:325px;height:23px;background:#fafafa;border-left:1px solid #d8d8d8;border-top:1px solid #d8d8d8;border-top-left-radius:6px;border-bottom-right-radius:10px"></div>
<div class="abs" style="left:672.5px;top:617.5px;font-size:14.6px;color:#2d2d2d;white-space:pre">«Users» seleccionado  (contiene 6 elementos)</div>

</body></html>
